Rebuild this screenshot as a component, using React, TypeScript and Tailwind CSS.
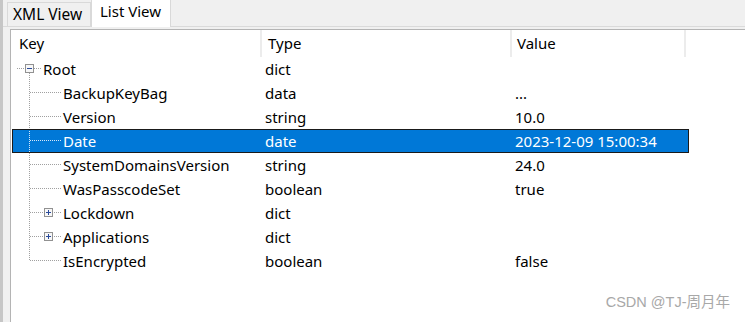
import React from 'react';

type Row = {
  key: string;
  type: string;
  value: string;
  kind: 'root' | 'leaf' | 'branch';
  last?: boolean;
  selected?: boolean;
};

const rows: Row[] = [
  { key: 'Root', type: 'dict', value: '', kind: 'root' },
  { key: 'BackupKeyBag', type: 'data', value: '...', kind: 'leaf' },
  { key: 'Version', type: 'string', value: '10.0', kind: 'leaf' },
  { key: 'Date', type: 'date', value: '2023-12-09 15:00:34', kind: 'leaf', selected: true },
  { key: 'SystemDomainsVersion', type: 'string', value: '24.0', kind: 'leaf' },
  { key: 'WasPasscodeSet', type: 'boolean', value: 'true', kind: 'leaf' },
  { key: 'Lockdown', type: 'dict', value: '', kind: 'branch' },
  { key: 'Applications', type: 'dict', value: '', kind: 'branch' },
  { key: 'IsEncrypted', type: 'boolean', value: 'false', kind: 'leaf', last: true },
];

// little +/- box of the tree control
const Expander: React.FC<{ x: number; open: boolean }> = ({ x, open }) => (
  <g>
    <rect x={x + 0.5} y={7.5} width={8} height={8} fill="#f7f7f7" stroke="#919191" />
    <line x1={x + 2} y1={11.5} x2={x + 7} y2={11.5} stroke="#2a4a9a" />
    {!open && <line x1={x + 4.5} y1={9} x2={x + 4.5} y2={14} stroke="#2a4a9a" />}
  </g>
);

const TreeLines: React.FC<{ row: Row }> = ({ row }) => {
  const dot = row.selected ? '#d8e8f8' : '#a0a0a0';
  if (row.kind === 'root') {
    return (
      <svg width={32} height={24} className="shrink-0">
        <line x1={5} y1={11.5} x2={13} y2={11.5} stroke={dot} strokeDasharray="1 1" />
        <line x1={22} y1={11.5} x2={30} y2={11.5} stroke={dot} strokeDasharray="1 1" />
        <line x1={17.5} y1={16} x2={17.5} y2={24} stroke={dot} strokeDasharray="1 1" />
        <Expander x={13} open />
      </svg>
    );
  }
  return (
    <svg width={52} height={24} className="shrink-0">
      <line x1={17.5} y1={0} x2={17.5} y2={row.last ? 12 : 24} stroke={dot} strokeDasharray="1 1" />
      {row.kind === 'branch' ? (
        <>
          <line x1={18} y1={11.5} x2={32} y2={11.5} stroke={dot} strokeDasharray="1 1" />
          <line x1={42} y1={11.5} x2={50} y2={11.5} stroke={dot} strokeDasharray="1 1" />
          <Expander x={32} open={false} />
        </>
      ) : (
        <line x1={18} y1={11.5} x2={50} y2={11.5} stroke={dot} strokeDasharray="1 1" />
      )}
    </svg>
  );
};

const App: React.FC = () => {
  return (
    <div
      className="relative w-[745px] h-[322px] overflow-hidden bg-[#f0f0f0] flex text-[15px] text-black"
      style={{ fontFamily: '"Noto Sans", "Noto Sans CJK SC", sans-serif' }}
    >
      {/* left window edge */}
      <div className="w-[3px] h-full bg-[#c6c6c6]" />

      <div className="flex-1 flex flex-col">
        {/* tabs */}
        <div className="h-[27px] flex items-end pl-[4px] border-b border-[#dadada]">
          <div className="w-[84px] h-[24px] bg-[#f0f0f0] border border-b-0 border-[#d9d9d9] pl-[5px] leading-[22px] text-[15.5px]">
            XML View
          </div>
          <div className="w-[80px] h-[28px] -mb-px bg-white border border-b-0 border-[#d9d9d9] pl-[8px] leading-[22px]">
            List View
          </div>
        </div>

        {/* list panel */}
        <div className="flex-1 mt-[2px] ml-[7px] bg-white border-l border-t border-[#b4b4b4] flex flex-col">
          {/* header */}
          <div className="h-[27px] flex items-center">
            <div className="w-[251px] h-full pl-[8px] flex items-center border-r-2 border-[#ececec]">Key</div>
            <div className="w-[250px] h-full pl-[6px] flex items-center border-r-2 border-[#ececec]">Type</div>
            <div className="w-[174px] h-full pl-[5px] flex items-center border-r-2 border-[#ececec]">Value</div>
          </div>

          {/* rows */}
          <div className="flex flex-col">
            {rows.map((row) => (
              <div
                key={row.key}
                className={`h-[24px] w-[677px] ml-px flex items-center ${
                  row.selected ? 'bg-[#0078d7] text-white outline outline-1 outline-[#1a1a1a] -outline-offset-1' : ''
                }`}
              >
                <div className="w-[250px] h-full flex items-center whitespace-nowrap">
                  <TreeLines row={row} />
                  <span className="-ml-px">{row.key}</span>
                </div>
                <div className="w-[250px] pl-[3px]">{row.type}</div>
                <div className="w-[174px] pl-[3px] whitespace-nowrap">{row.value}</div>
              </div>
            ))}
          </div>
        </div>
      </div>

      {/* watermark */}
      <div className="absolute right-[15px] bottom-[8px] text-[14.5px] text-[#a8a8a8]" style={{ fontFamily: '"Liberation Sans", "Noto Sans CJK SC", sans-serif' }}>
        CSDN @TJ-周月年
      </div>
    </div>
  );
};

export default App;
